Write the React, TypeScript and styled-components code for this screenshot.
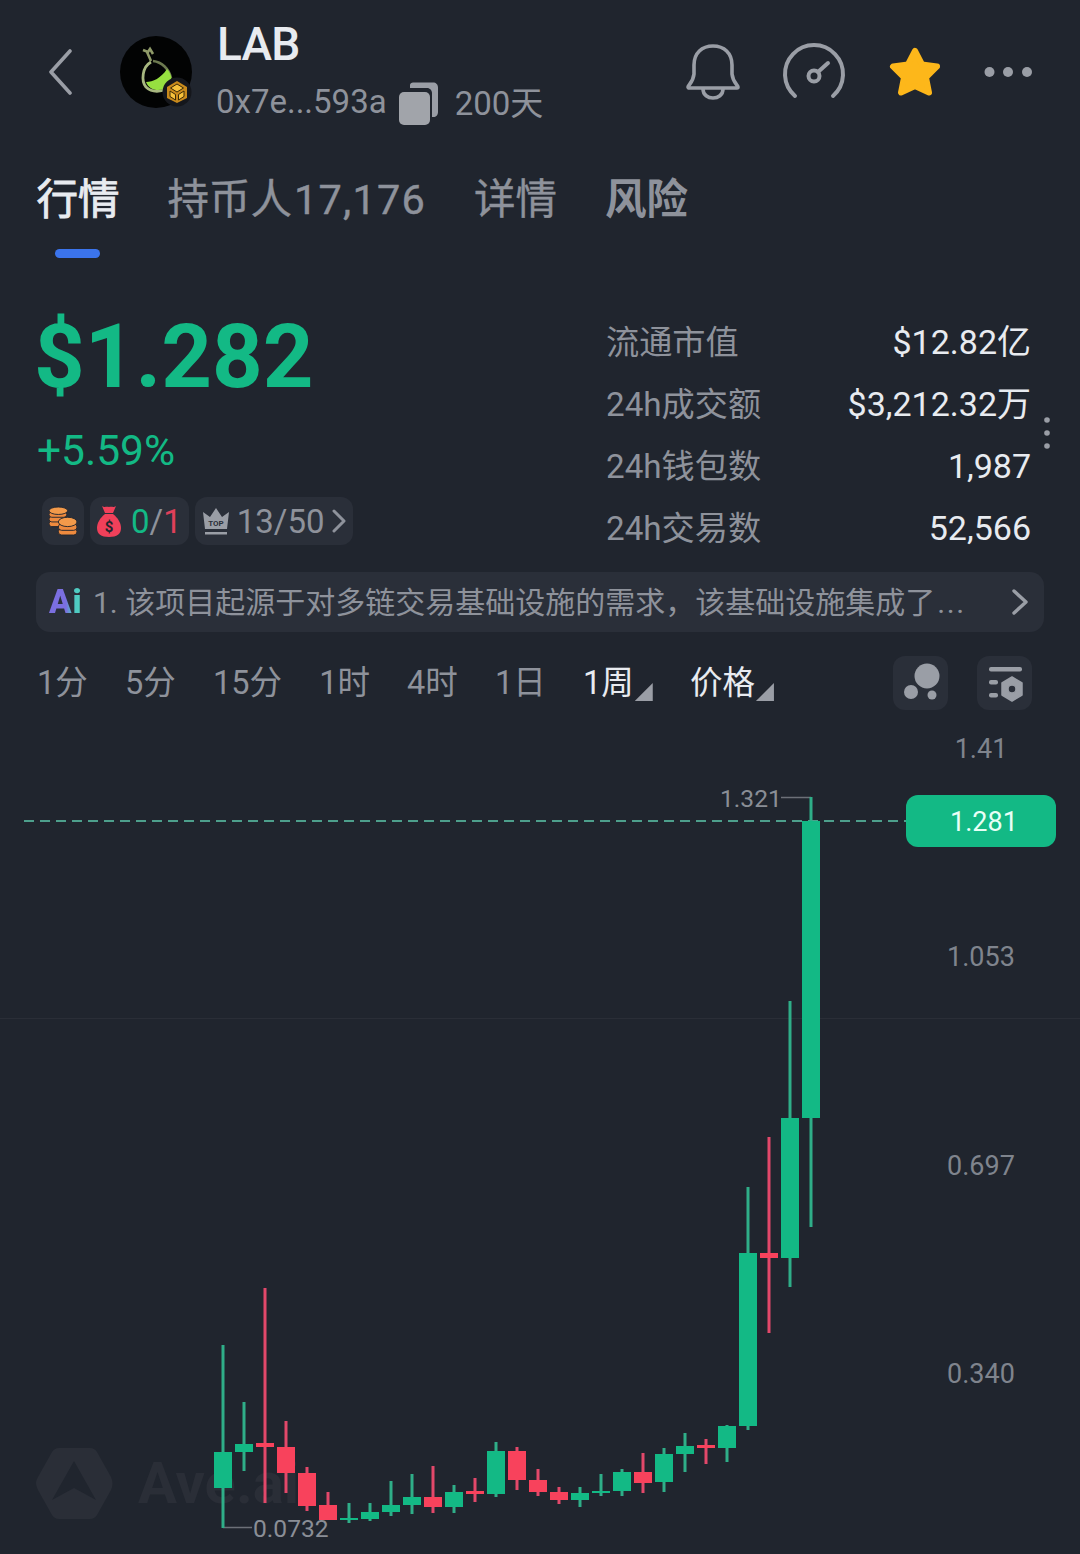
import React from "react";
import styled, { createGlobalStyle } from "styled-components";

const GREEN = "#13b985";
const RED = "#f8425c";
const GREY = "#8e929b";
const ICON = "#9a9ea6";
const LIGHT = "#e8ebf0";
const BG = "#20252e";
const CHIP = "#2a2f39";
const CHART_TOP = 710;

const Global = createGlobalStyle`
  html, body { margin: 0; padding: 0; background: ${BG}; }
  * { box-sizing: border-box; }
`;

const Page = styled.div`
  width: 1080px;
  height: 1554px;
  overflow: hidden;
  background: ${BG};
  display: flex;
  flex-direction: column;
  font-family: Roboto, "Noto Sans CJK SC", sans-serif;
  color: ${GREY};
`;

const Header = styled.header`
  height: 144px;
  flex: none;
  padding: 0 48px;
  display: flex;
  align-items: center;
`;
const BackIcon = styled.svg`
  width: 24px;
  height: 46px;
  margin-right: 48px;
  flex: none;
`;
const Avatar = styled.svg`
  width: 72px;
  height: 72px;
  margin-right: 25px;
  flex: none;
`;
const TitleBlock = styled.div`
  display: flex;
  flex-direction: column;
  flex: 1;
`;
const Title = styled.div`
  font-size: 46px;
  line-height: 46px;
  font-weight: 500;
  letter-spacing: -0.8px;
  color: ${LIGHT};
`;
const SubRow = styled.div`
  display: flex;
  align-items: center;
  margin: 12px 0 0 -1px;
  height: 44px;
  font-size: 33px;
`;
const CopyIcon = styled.svg`
  width: 42px;
  height: 44px;
  margin: 6px 15px 0 11px;
  flex: none;
`;
const HeaderIcons = styled.div`
  display: flex;
  align-items: center;
  gap: 40px;
`;
const HeaderIcon = styled.svg`
  flex: none;
  height: 60px;
`;

const TabSection = styled.nav`
  flex: none;
  padding: 26px 0 0 36.5px;
`;
const TabRow = styled.div`
  display: flex;
  gap: 48px;
  height: 60px;
  align-items: center;
`;
const Tab = styled.div<{ $active?: boolean; $bold?: boolean }>`
  font-size: 41.5px;
  line-height: 60px;
  font-weight: ${(p) => (p.$bold ? 700 : 400)};
  -webkit-text-stroke: ${(p) => (p.$active ? "0.9px" : p.$bold ? "0" : "0.4px")};
  color: ${(p) => (p.$active ? LIGHT : GREY)};
  white-space: nowrap;
`;
const TabCount = styled.span`
  letter-spacing: 1.2px;
  margin-left: 2px;
`;
const Underline = styled.div`
  width: 45px;
  height: 9px;
  border-radius: 5px;
  margin: 19px 0 0 18.5px;
  background: #3b74ec;
`;

const Summary = styled.section`
  position: relative;
  flex: none;
  display: flex;
  justify-content: space-between;
  padding: 0 49px 0 37px;
  margin-top: 53px;
  height: 248px;
`;
const LeftCol = styled.div`
  display: flex;
  flex-direction: column;
`;
const Price = styled.div`
  font-size: 88.5px;
  line-height: 90px;
  font-weight: 700;
  color: ${GREEN};
  margin: 1px 0 0 -3px;
`;
const Change = styled.div`
  font-size: 42.5px;
  line-height: 48px;
  margin-top: 25px;
  color: ${GREEN};
`;
const Chips = styled.div`
  display: flex;
  gap: 6px;
  margin: 22px 0 0 5px;
`;
const Chip = styled.div<{ $gap?: number }>`
  height: 48px;
  padding: 0 7px;
  border-radius: 12px;
  background: ${CHIP};
  display: flex;
  align-items: center;
  font-size: 33px;
  gap: ${(p) => p.$gap ?? 7}px;
`;
const ChipIcon = styled.svg`
  flex: none;
`;
const Tint = styled.span<{ $color: string }>`
  color: ${(p) => p.$color};
`;
const Stats = styled.div`
  width: 425px;
  display: flex;
  flex-direction: column;
`;
const StatRow = styled.div`
  height: 62px;
  line-height: 62px;
  display: flex;
  align-items: baseline;
  justify-content: space-between;
  font-size: 33.2px;
`;
const StatValue = styled.span`
  font-size: 34px;
  color: ${LIGHT};
`;
const VDots = styled.svg`
  position: absolute;
  left: 1041px;
  top: 106px;
  width: 12px;
  height: 32px;
`;

const AiBar = styled.div`
  flex: none;
  margin: 13px 36px 0;
  height: 60px;
  border-radius: 14px;
  background: ${CHIP};
  display: flex;
  align-items: center;
  padding: 0 15px 0 13px;
`;
const AiMark = styled.span`
  width: 31px;
  margin-right: 13px;
  font-size: 33px;
  line-height: 40px;
  font-weight: 900;
  letter-spacing: 1px;
  background: linear-gradient(90deg, #7b6fe0 0%, #7b6fe0 55%, #4fc3c4 75%, #4fd0c0 100%);
  -webkit-background-clip: text;
  background-clip: text;
  color: transparent;
`;
const AiText = styled.span`
  flex: 1;
  margin-top: -4px;
  font-size: 30px;
  white-space: nowrap;
  color: ${GREY};
`;
const AiDots = styled.span`
  letter-spacing: 1.6px;
  margin-left: 2px;
`;
const AiChevron = styled.svg`
  width: 18px;
  height: 28px;
  flex: none;
`;

const Toolbar = styled.div`
  flex: none;
  margin-top: 24px;
  height: 54px;
  padding: 0 48px 0 37px;
  display: flex;
  align-items: center;
`;
const Periods = styled.div`
  display: flex;
  flex: 1;
  gap: 37.2px;
  align-items: center;
`;
const Period = styled.div<{ $active?: boolean }>`
  height: 44px;
  display: flex;
  font-size: 32.5px;
  line-height: 44px;
  white-space: nowrap;
  color: ${(p) => (p.$active ? LIGHT : GREY)};
`;
const Corner = styled.i`
  width: 18px;
  height: 18px;
  align-self: flex-end;
  margin: 0 0 4px 1px;
  background: ${ICON};
  clip-path: polygon(100% 0, 100% 100%, 0 100%);
`;
const ToolButtons = styled.div`
  display: flex;
  gap: 29px;
`;
const ToolButton = styled.div`
  width: 55px;
  height: 54px;
  border-radius: 12px;
  background: ${CHIP};
`;
const ToolIcon = styled.svg`
  width: 55px;
  height: 54px;
  display: block;
`;

const Chart = styled.div`
  position: relative;
  flex: 1;
`;
const ChartSvg = styled.svg`
  position: absolute;
  inset: 0;
  width: 1080px;
  height: 844px;
`;
const Watermark = styled.div`
  position: absolute;
  left: 138px;
  top: ${1456 - CHART_TOP}px;
  font-size: 58px;
  line-height: 54px;
  font-weight: 700;
  color: #2a2e37;
`;
const AxisLabel = styled.div<{ $y: number }>`
  position: absolute;
  left: 906px;
  width: 150px;
  top: ${(p) => p.$y - CHART_TOP - 17}px;
  height: 36px;
  line-height: 36px;
  text-align: center;
  font-size: 27px;
  color: #7f848d;
`;
const PriceTag = styled.div`
  position: absolute;
  left: 906px;
  top: ${795 - CHART_TOP}px;
  width: 150px;
  height: 52px;
  padding-left: 6px;
  border-radius: 12px;
  background: ${GREEN};
  color: #e8fff6;
  font-size: 27px;
  line-height: 54px;
  text-align: center;
`;
const ExtremeLabel = styled.div<{ $x: number; $y: number }>`
  position: absolute;
  left: ${(p) => p.$x}px;
  top: ${(p) => p.$y - CHART_TOP - 14}px;
  line-height: 28px;
  font-size: 24.6px;
  color: #8a8e96;
`;

type Candle = [number, number, number, number, number, "g" | "r"];
const candles: Candle[] = [
  [223, 1345, 1528, 1452, 1488, "g"],
  [244, 1402, 1471, 1444, 1452, "g"],
  [265, 1288, 1503, 1443, 1447, "r"],
  [286, 1421, 1493, 1447, 1473, "r"],
  [307, 1467, 1511, 1473, 1506, "r"],
  [328, 1492, 1520, 1505, 1520, "r"],
  [349, 1503, 1523, 1518, 1520, "g"],
  [370, 1503, 1521, 1512, 1519, "g"],
  [391, 1481, 1516, 1505, 1512, "g"],
  [412, 1474, 1514, 1497, 1505, "g"],
  [433, 1466, 1513, 1497, 1507, "r"],
  [454, 1485, 1513, 1492, 1507, "g"],
  [475, 1478, 1502, 1491, 1494, "r"],
  [496, 1442, 1497, 1451, 1494, "g"],
  [517, 1447, 1490, 1451, 1480, "r"],
  [538, 1469, 1496, 1480, 1492, "r"],
  [559, 1487, 1504, 1492, 1500, "r"],
  [580, 1487, 1507, 1493, 1500, "g"],
  [601, 1474, 1496, 1491, 1493, "g"],
  [622, 1469, 1496, 1472, 1491, "g"],
  [643, 1453, 1493, 1472, 1483, "r"],
  [664, 1448, 1492, 1454, 1482, "g"],
  [685, 1433, 1472, 1446, 1454, "g"],
  [706, 1439, 1464, 1445, 1448, "r"],
  [727, 1425, 1462, 1426, 1448, "g"],
  [748, 1187, 1430, 1253, 1426, "g"],
  [769, 1137, 1333, 1253, 1258, "r"],
  [790, 1001, 1287, 1118, 1258, "g"],
  [811, 797, 1227, 821, 1118, "g"],
];

const wickColor = { g: "#2fae88", r: "#e2486a" };
const bodyColor = { g: GREEN, r: RED };

const periods = ["1分", "5分", "15分", "1时", "4时", "1日"];
const stats = [
  ["流通市值", "$12.82亿"],
  ["24h成交额", "$3,212.32万"],
  ["24h钱包数", "1,987"],
  ["24h交易数", "52,566"],
];

export default function App() {
  return (
    <Page>
      <Global />
      <Header>
        <BackIcon viewBox="0 0 24 46">
          <path d="M22 2 L3 23 L22 44" fill="none" stroke={ICON} strokeWidth="3.6" strokeLinecap="round" strokeLinejoin="round" />
        </BackIcon>
        <Avatar viewBox="0 0 72 72">
          <circle cx="36" cy="36" r="36" fill="#020303" />
          <path d="M23 14 L28 16 L30 13 L33 18 M27 16 L31 25" fill="none" stroke="#8f9a68" strokeWidth="2.6" />
          <path d="M31 26 C22 31 21 45 26 51 C32 57 42 56 47 52" fill="none" stroke="#a8b880" strokeWidth="2.8" />
          <path d="M33 25 C42 26 49 33 51 42" fill="none" stroke="#6d7a50" strokeWidth="2.6" />
          <path d="M26 46 C33 46 41 42 47 33 C52 38 53 46 49 50 C42 56 30 56 26 46 Z" fill="#96e040" />
          <circle cx="57" cy="56" r="14.5" fill="#15171c" />
          <path d="M57 45 L67 51 L67 62 L57 67 L47 62 L47 51 Z" fill="#c98a1c" />
          <path d="M57 48 L63.5 52 L57 56 L50.5 52 Z M50 55 L55.5 58.5 L55.5 64 L50 60.5 Z M64 55 L58.5 58.5 L58.5 64 L64 60.5 Z" fill="#f7c23c" stroke="#3a2a08" strokeWidth="1" />
        </Avatar>
        <TitleBlock>
          <Title>LAB</Title>
          <SubRow>
            <span>0x7e...593a</span>
            <CopyIcon viewBox="0 0 42 44">
              <path d="M12 3 C12 1.5 13.5 0.5 15 0.5 L35 0.5 C38 0.5 40 2.5 40 5.5 L40 30 C40 33 38 35 35.5 35 L34 35 L34 11 C34 8.5 32 6 29 6 L12 6 Z" fill={ICON} />
              <rect x="1" y="10" width="31" height="33" rx="5" fill="#a1a4aa" />
            </CopyIcon>
            <span>200天</span>
          </SubRow>
        </TitleBlock>
        <HeaderIcons>
          <HeaderIcon viewBox="1 1 56 60" width="56">
            <path d="M3 46 C3 44 8 42 9 33 L9 24 C9 12 17 5 28 5 C39 5 47 12 47 24 L47 33 C48 42 53 44 53 46 C53 46.500 52.500 47 52 47 L4 47 C3.500 47 3 46.500 3 46 Z" fill="none" stroke={ICON} strokeWidth="3.6" strokeLinejoin="round" />
            <path d="M18 48 C18 60 38 60 38 48" fill="none" stroke={ICON} strokeWidth="3.6" />
          </HeaderIcon>
          <HeaderIcon viewBox="0 1 64 60" width="64">
            <path d="M13 55 A29 29 0 1 1 51 55" fill="none" stroke={ICON} strokeWidth="4" strokeLinecap="round" />
            <circle cx="32" cy="35" r="5.500" fill="none" stroke={ICON} strokeWidth="4" />
            <path d="M36 31 L46 22" stroke={ICON} strokeWidth="4" strokeLinecap="round" />
          </HeaderIcon>
          <HeaderIcon viewBox="0 0 58 60" width="58">
            <path d="M29 9 L36 22.500 L51 24.500 L40 35.500 L43 50.500 L29 44 L15 50.500 L18 35.500 L7 24.500 L22 22.500 Z" fill="#fdb71a" stroke="#fdb71a" strokeWidth="6" strokeLinejoin="round" />
          </HeaderIcon>
          <HeaderIcon viewBox="0 0 48 60" width="48">
            <circle cx="5.500" cy="30" r="5" fill={ICON} />
            <circle cx="24" cy="30" r="5" fill={ICON} />
            <circle cx="43" cy="30" r="5" fill={ICON} />
          </HeaderIcon>
        </HeaderIcons>
      </Header>

      <TabSection>
        <TabRow>
          <Tab $active>行情</Tab>
          <Tab>持币人<TabCount>17,176</TabCount></Tab>
          <Tab>详情</Tab>
          <Tab $bold>风险</Tab>
        </TabRow>
        <Underline />
      </TabSection>

      <Summary>
        <LeftCol>
          <Price>$1.282</Price>
          <Change>+5.59%</Change>
          <Chips>
            <Chip>
              <ChipIcon viewBox="0 0 30 30" width="28" height="30">
                <g fill="#ee8a3e" stroke="#20252e" strokeWidth="1">
                  <rect x="0" y="15" width="17" height="6" rx="3" />
                  <rect x="0" y="10" width="19" height="6" rx="3" />
                  <rect x="0" y="5" width="19" height="6" rx="3" />
                  <ellipse cx="10" cy="4" rx="10" ry="4" fill="#f39a4a" />
                  <rect x="10" y="23" width="20" height="7" rx="3.500" />
                  <rect x="10" y="18" width="20" height="7" rx="3.500" />
                  <ellipse cx="20" cy="16" rx="10" ry="5" fill="#f39a4a" />
                </g>
              </ChipIcon>
            </Chip>
            <Chip $gap={10}>
              <ChipIcon viewBox="0 0 24 32" width="24" height="32">
                <path d="M5 1 C8 3 9 1 12 2 C15 1 16 3 19 1 L16 8 L8 8 Z" fill="#f0405a" />
                <path d="M8 9 L16 9 C21 13 24 18 24 23 C24 29 20 32 12 32 C4 32 0 29 0 23 C0 18 3 13 8 9 Z" fill="#f0405a" />
                <text x="12" y="27" textAnchor="middle" fontSize="15" fontWeight="700" fill="#20252e" fontFamily="Roboto, sans-serif">$</text>
              </ChipIcon>
              <span><Tint $color={GREEN}>0</Tint>/<Tint $color="#e0405a">1</Tint></span>
            </Chip>
            <Chip>
              <ChipIcon viewBox="0 0 28 27" width="28" height="27">
                <path d="M1 4 L8 9 L14 0 L20 9 L27 4 L25 21 L3 21 Z" fill={ICON} />
                <rect x="3" y="24" width="22" height="2.500" fill={ICON} />
                <text x="14" y="18" textAnchor="middle" fontSize="8" fontWeight="700" fill="#2a2f39" fontFamily="Roboto, sans-serif">TOP</text>
              </ChipIcon>
              <span>13/50</span>
              <ChipIcon viewBox="0 0 14 24" width="14" height="24">
                <path d="M2 2 L12 12 L2 22" fill="none" stroke={GREY} strokeWidth="3" strokeLinecap="round" strokeLinejoin="round" />
              </ChipIcon>
            </Chip>
          </Chips>
        </LeftCol>
        <Stats>
          {stats.map(([label, value]) => (
            <StatRow key={label}>
              <span>{label}</span>
              <StatValue>{value}</StatValue>
            </StatRow>
          ))}
        </Stats>
        <VDots viewBox="0 0 12 32">
          <circle cx="6" cy="3" r="2.800" fill={ICON} />
          <circle cx="6" cy="16" r="2.800" fill={ICON} />
          <circle cx="6" cy="29" r="2.800" fill={ICON} />
        </VDots>
      </Summary>

      <AiBar>
        <AiMark>Ai</AiMark>
        <AiText>1. 该项目起源于对多链交易基础设施的需求，该基础设施集成了<AiDots>...</AiDots></AiText>
        <AiChevron viewBox="0 0 18 28">
          <path d="M3 3 L15 14 L3 25" fill="none" stroke={ICON} strokeWidth="3.4" strokeLinecap="round" strokeLinejoin="round" />
        </AiChevron>
      </AiBar>

      <Toolbar>
        <Periods>
          {periods.map((p) => (
            <Period key={p}>{p}</Period>
          ))}
          <Period $active>1周<Corner /></Period>
          <Period $active>价格<Corner /></Period>
        </Periods>
        <ToolButtons>
          <ToolButton>
            <ToolIcon viewBox="0 0 55 54">
              <circle cx="34" cy="20" r="12.500" fill={ICON} />
              <circle cx="18" cy="36" r="7" fill={ICON} />
              <circle cx="39" cy="39" r="4.500" fill={ICON} />
            </ToolIcon>
          </ToolButton>
          <ToolButton>
            <ToolIcon viewBox="0 0 55 54">
              <rect x="12" y="11" width="33" height="4.500" rx="2" fill={ICON} />
              <rect x="12" y="24" width="9" height="4.500" rx="2" fill={ICON} />
              <rect x="12" y="37" width="9" height="4.500" rx="2" fill={ICON} />
              <path fillRule="evenodd" d="M35 21 L45 27 L45 39 L35 45 L25 39 L25 27 Z M35 29 A4 4 0 1 0 35 37 A4 4 0 1 0 35 29 Z" fill={ICON} stroke={ICON} strokeWidth="1.500" strokeLinejoin="round" />
            </ToolIcon>
          </ToolButton>
        </ToolButtons>
      </Toolbar>

      <Chart>
        <Watermark>Ave.ai</Watermark>
        <ChartSvg viewBox={`0 ${CHART_TOP} 1080 844`}>
          <rect x="0" y="1018" width="1080" height="1" fill="#2a2e37" />
          <path d="M36 1483 C36 1481 37 1479 38 1477 L52 1452 C53 1450 56 1448 59 1448 L90 1448 C93 1448 96 1450 97 1452 L111 1477 C113 1481 113 1486 111 1490 L97 1515 C96 1517 93 1519 90 1519 L59 1519 C56 1519 53 1517 52 1515 L38 1490 C37 1488 36 1485 36 1483 Z" fill="#2a2e37" />
          <path d="M74 1461 L96 1500 L74 1488 L52 1500 Z" fill="#20252e" />
          <line x1="24" y1="821" x2="906" y2="821" stroke="#4d9f8c" strokeWidth="2" strokeDasharray="10 6" />
          <path d="M781 797.500 L811 797.500" stroke="#6c7078" strokeWidth="1.500" fill="none" />
          <path d="M223 1527.500 L252 1527.500" stroke="#6c7078" strokeWidth="1.500" fill="none" />
          {candles.map(([x, hi, lo, top, bottom, c]) => (
            <g key={x}>
              <rect x={x - 1.5} y={hi} width="3" height={lo - hi} fill={wickColor[c]} />
              <rect x={x - 9} y={top} width="18" height={bottom - top} fill={bodyColor[c]} />
            </g>
          ))}
        </ChartSvg>
        <AxisLabel $y={748}>1.41</AxisLabel>
        <AxisLabel $y={956}>1.053</AxisLabel>
        <AxisLabel $y={1165}>0.697</AxisLabel>
        <AxisLabel $y={1373}>0.340</AxisLabel>
        <PriceTag>1.281</PriceTag>
        <ExtremeLabel $x={720} $y={799}>1.321</ExtremeLabel>
        <ExtremeLabel $x={253} $y={1529}>0.0732</ExtremeLabel>
      </Chart>
    </Page>
  );
}
